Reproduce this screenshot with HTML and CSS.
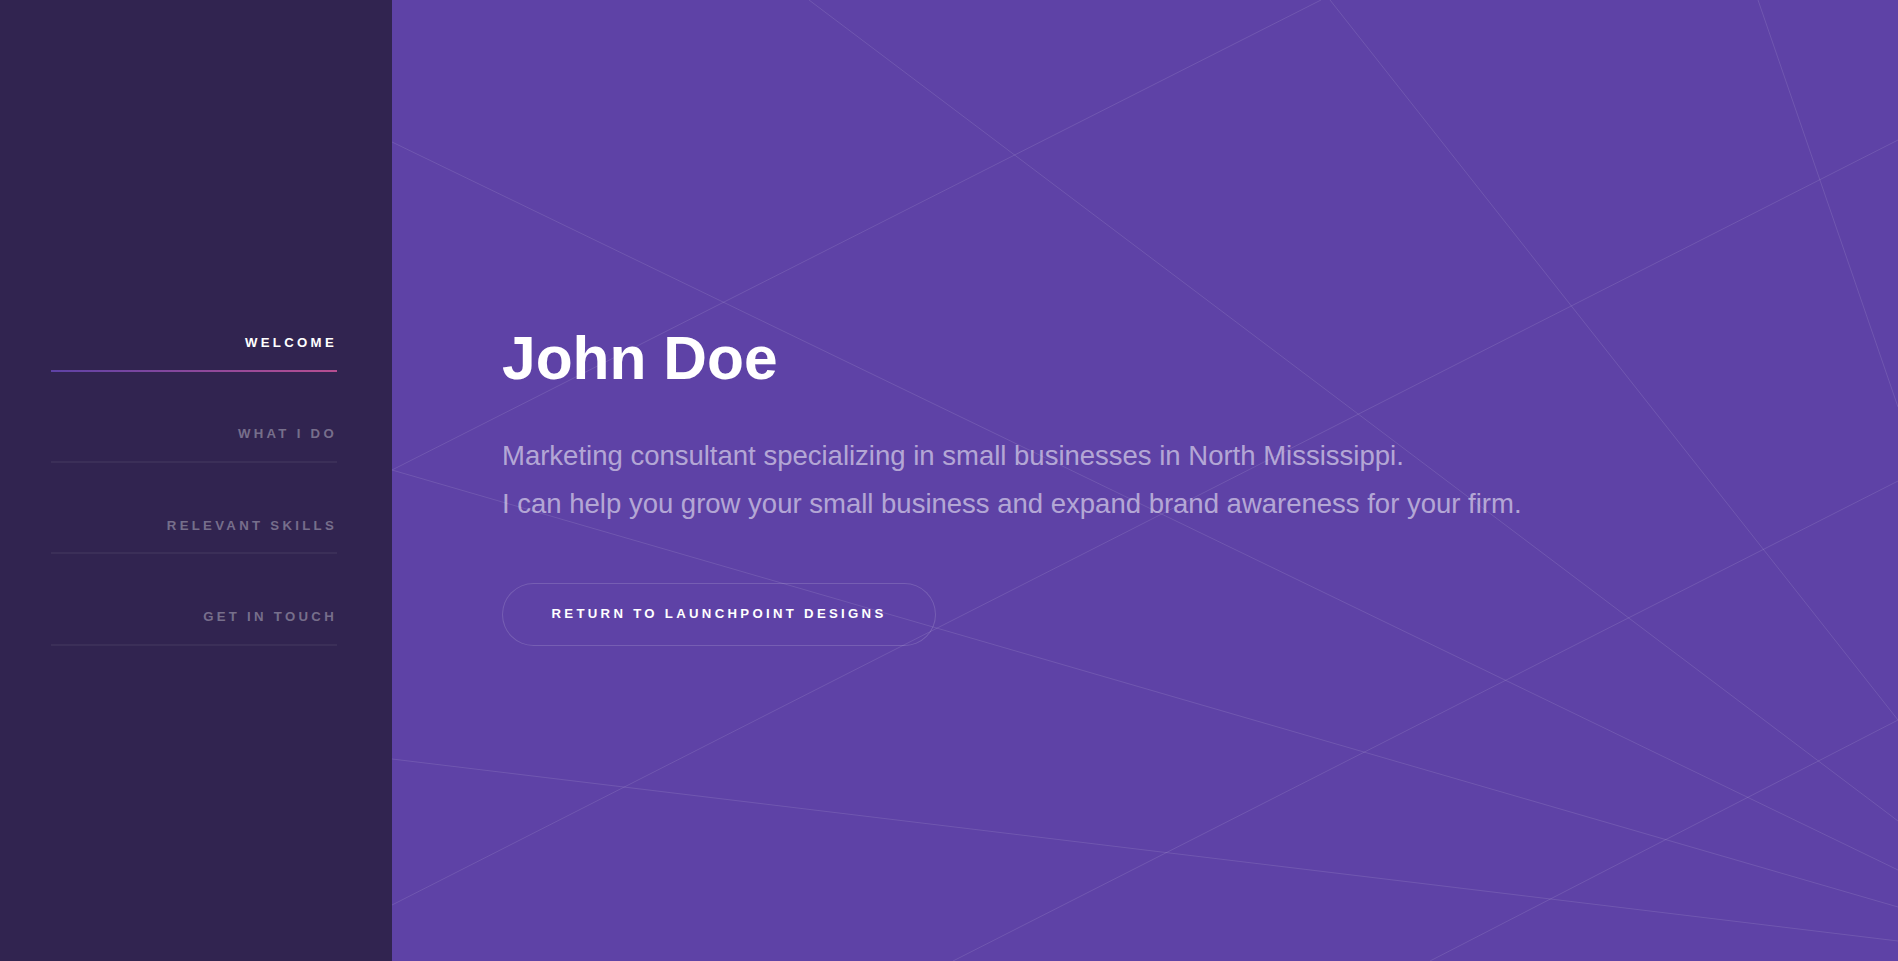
FILE: index.html
```html
<!DOCTYPE html>
<html lang="en">
<head>
<meta charset="utf-8">
<title>John Doe</title>
<link rel="stylesheet" href="styles.css">
</head>
<body>
<div class="page">
  <aside class="sidebar">
    <nav class="nav">
      <ul class="nav-list">
        <li><a class="nav-link active" href="#intro">Welcome</a></li>
        <li><a class="nav-link" href="#one">What I Do</a></li>
        <li><a class="nav-link" href="#two">Relevant Skills</a></li>
        <li><a class="nav-link" href="#three">Get in Touch</a></li>
      </ul>
    </nav>
  </aside>
  <main class="intro" id="intro">
    <svg class="intro-bg" viewBox="0 0 1506 961" preserveAspectRatio="none" aria-hidden="true">
      <g class="bg-lines">
        <line x1="0" y1="142" x2="1506" y2="870"/>
        <line x1="0" y1="470" x2="1506" y2="907"/>
        <line x1="0" y1="470" x2="929" y2="0"/>
        <line x1="0" y1="759" x2="1506" y2="941"/>
        <line x1="0" y1="905" x2="1506" y2="140"/>
        <line x1="561" y1="961" x2="1506" y2="481"/>
        <line x1="1038" y1="961" x2="1506" y2="720"/>
        <line x1="417" y1="0" x2="1506" y2="821"/>
        <line x1="938" y1="0" x2="1506" y2="720"/>
        <line x1="1366" y1="0" x2="1506" y2="407"/>
      </g>
    </svg>
    <div class="intro-inner">
      <h1 class="intro-title">John Doe</h1>
      <p class="intro-text">Marketing consultant specializing in small businesses in North Mississippi.<br>I can help you grow your small business and expand brand awareness for your firm.</p>
      <a class="button" href="#">Return to Launchpoint Designs</a>
    </div>
  </main>
</div>
</body>
</html>
```
FILE: styles.css
```css
html, body {
  margin: 0;
  padding: 0;
  height: 100%;
}

body {
  font-family: "Liberation Sans", Arial, Helvetica, sans-serif;
  background: #5e42a6;
  overflow: hidden;
}

.page {
  display: flex;
  height: 100vh;
}

/* Sidebar */
.sidebar {
  flex: none;
  width: 392px;
  box-sizing: border-box;
  padding: 0 55px 2px 51px;
  background: #312450;
  display: flex;
  flex-direction: column;
  justify-content: center;
}

.nav-list {
  list-style: none;
  margin: 0;
  padding: 0;
}

.nav-list li + li {
  margin-top: 32.5px;
}

.nav-link {
  display: block;
  position: relative;
  padding: 17.8px 0;
  font-size: 13.2px;
  line-height: 1.75;
  font-weight: bold;
  letter-spacing: 0.25em;
  text-transform: uppercase;
  text-align: right;
  text-decoration: none;
  color: rgba(255, 255, 255, 0.35);
}

.nav-link::before {
  content: "";
  position: absolute;
  left: 0;
  right: 0;
  bottom: 0;
  height: 2px;
  background: rgba(255, 255, 255, 0.05);
}

.nav-link.active {
  color: #ffffff;
}

.nav-link.active::before {
  background: linear-gradient(to right, #5e42a6, #b74e91);
}

/* Intro */
.intro {
  flex: 1;
  position: relative;
  overflow: hidden;
  display: flex;
  flex-direction: column;
  justify-content: center;
  padding: 0 110px 2px;
}

.intro-bg {
  position: absolute;
  top: 0;
  left: 0;
  width: 100%;
  height: 100%;
}

.bg-lines line {
  stroke: #ffffff;
  stroke-opacity: 0.11;
  stroke-width: 1;
  vector-effect: non-scaling-stroke;
}

.intro-inner {
  position: relative;
  display: flex;
  flex-direction: column;
  align-items: flex-start;
}

.intro-title {
  margin: 0 0 28px;
  font-size: 60.5px;
  line-height: 1.5;
  font-weight: bold;
  color: #ffffff;
}

.intro-text {
  margin: 0 0 55px;
  font-size: 27.5px;
  line-height: 1.75;
  color: rgba(255, 255, 255, 0.55);
}

.button {
  display: inline-block;
  height: 62.7px;
  line-height: 62.7px;
  padding: 0 49.5px;
  border-radius: 40px;
  box-shadow: inset 0 0 0 1px rgba(255, 255, 255, 0.15);
  color: #ffffff;
  font-size: 13.2px;
  font-weight: bold;
  letter-spacing: 0.25em;
  text-transform: uppercase;
  text-decoration: none;
  white-space: nowrap;
}
```
